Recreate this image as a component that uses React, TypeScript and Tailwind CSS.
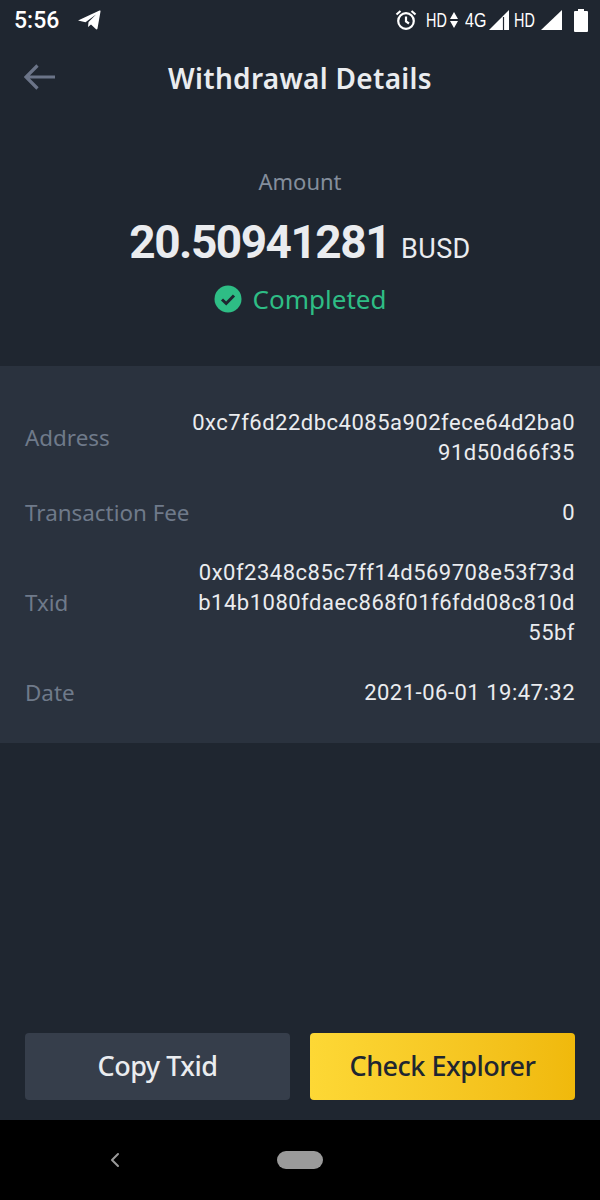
import { ChevronLeft } from "lucide-react";

const rows = [
  { label: "Address", lines: ["0xc7f6d22dbc4085a902fece64d2ba0", "91d50d66f35"] },
  { label: "Transaction Fee", lines: ["0"] },
  { label: "Txid", lines: ["0x0f2348c85c7ff14d569708e53f73d", "b14b1080fdaec868f01f6fdd08c810d", "55bf"] },
  { label: "Date", lines: ["2021-06-01 19:47:32"] },
];

const StatusBar = () => (
  <div className="flex items-center justify-between h-[40px] pl-[14px] pr-[12px] text-white">
    <div className="flex items-center gap-[18px]">
      <span className="text-[23px] font-medium font-['Roboto',sans-serif] leading-none">5:56</span>
      <svg width="24" height="22" viewBox="0 0 24 22" fill="#fff">
        <path d="M1 11.500 22.500 1.500c.7-.3 1.200.2 1 1L20.500 19.500c-.2 1-1 1.200-1.700.6L14 15.500l-3 2.500 .5-5L19 5.500 8.500 13.200z" />
      </svg>
    </div>
    <div className="flex items-center font-['Liberation_Sans',sans-serif] text-[20px] leading-none text-white">
      <svg width="24" height="24" viewBox="0 0 24 24" fill="none" stroke="#fff" strokeWidth="2.200" className="mr-[8px]">
        <circle cx="12" cy="13" r="7.800" />
        <path d="M12 8.500v5l3 2M2.500 6.500l4-3.500M21.500 6.500l-4-3.500" />
      </svg>
      <span className="scale-x-[.72] origin-left w-[20px]">HD</span>
      <svg width="10" height="20" viewBox="0 0 10 20" fill="#fff" className="ml-[3px] mr-[6px]">
        <path d="M5 2 9 9H1zM1 11h8l-4 7z" />
      </svg>
      <span className="scale-x-[.8] origin-left w-[21px]">4G</span>
      <svg width="22" height="22" viewBox="0 0 22 22" className="ml-[3px]">
        <path d="M0 21 20 1v20H0z" fill="#fff" />
        <path d="M14.500 8v13" stroke="#1f2630" strokeWidth="1.200" />
      </svg>
      <span className="scale-x-[.72] origin-left w-[20px] ml-[3px]">HD</span>
      <svg width="22" height="22" viewBox="0 0 22 22" className="ml-[7px] mr-[11px]">
        <path d="M0 21 21 1v20H0z" fill="#fff" />
      </svg>
      <svg width="14" height="24" viewBox="0 0 14 24" fill="#fff">
        <path d="M4 1h6v2h3a1 1 0 0 1 1 1v19a1 1 0 0 1-1 1H1a1 1 0 0 1-1-1V4a1 1 0 0 1 1-1h3z" />
      </svg>
    </div>
  </div>
);

export default function App() {
  return (
    <div className="w-[600px] h-[1200px] flex flex-col bg-[#1f2630] font-['Noto_Sans','Roboto',sans-serif] overflow-hidden">
      <StatusBar />
      <header className="relative flex items-center justify-center h-[78px]">
        <svg width="32" height="26" viewBox="0 0 32 26" fill="none" stroke="#6b7488" strokeWidth="3.200" className="absolute left-[24px] top-[24px]">
          <path d="M2 13H31M13.500 1.500 2 13l11.500 11.500" />
        </svg>
        <h1 className="text-[28px] font-semibold text-[#eaecef] leading-none tracking-[.3px] -mt-[2px]">Withdrawal Details</h1>
      </header>

      <section className="flex flex-col items-center h-[248px] pt-[48px]">
        <div className="text-[22px] leading-[30px] text-[#848e9c]">Amount</div>
        <div className="flex items-baseline mt-[22px] h-[48px] font-['Roboto',sans-serif] text-[#eaecef]">
          <span className="text-[46px] font-bold tracking-[-1.500px] leading-[48px]">20.50941281</span>
          <span className="text-[27px] ml-[11px] tracking-[.4px]">BUSD</span>
        </div>
        <div className="flex items-center gap-[11px] mt-[16px]">
          <svg width="28" height="28" viewBox="0 0 28 28">
            <circle cx="14" cy="14" r="13.500" fill="#2ebd85" />
            <path d="M8 14.500l4.200 4L20 10.500" fill="none" stroke="#1f2630" strokeWidth="3" />
          </svg>
          <span className="text-[26px] leading-[34px] text-[#2ebd85]">Completed</span>
        </div>
      </section>

      <section className="flex flex-col gap-[30px] bg-[#2a323e] px-[25px] pt-[42px] pb-[35px]">
        {rows.map((row) => (
          <div key={row.label} className="flex items-center justify-between">
            <span className="text-[22.400px] text-[#6f7a8a] leading-[30px] -mt-[1px]">{row.label}</span>
            <div className="flex flex-col items-end text-[22px] leading-[30px] text-[#eaecef] font-['Roboto',sans-serif] tracking-[.5px]">
              {row.lines.map((line) => (
                <span key={line}>{line}</span>
              ))}
            </div>
          </div>
        ))}
      </section>

      <div className="flex-1" />

      <div className="flex gap-[20px] px-[25px] pb-[20px]">
        <button className="flex-1 h-[67px] rounded-[4px] bg-[#363e4b] text-[#eaecef] text-[27px] font-medium tracking-[-.5px]">
          Copy Txid
        </button>
        <button className="flex-1 h-[67px] rounded-[4px] bg-gradient-to-r from-[#fdd835] to-[#f0b90b] text-[#1f2630] text-[27px] font-medium tracking-[-.5px]">
          Check Explorer
        </button>
      </div>

      <nav className="relative flex items-center justify-center h-[80px] bg-black">
        <ChevronLeft size={24} strokeWidth={2} className="absolute left-[103px] top-[28px] text-[#9a9a9a]" />
        <div className="w-[46px] h-[18px] rounded-full bg-[#9a9a9a]" />
      </nav>
    </div>
  );
}
